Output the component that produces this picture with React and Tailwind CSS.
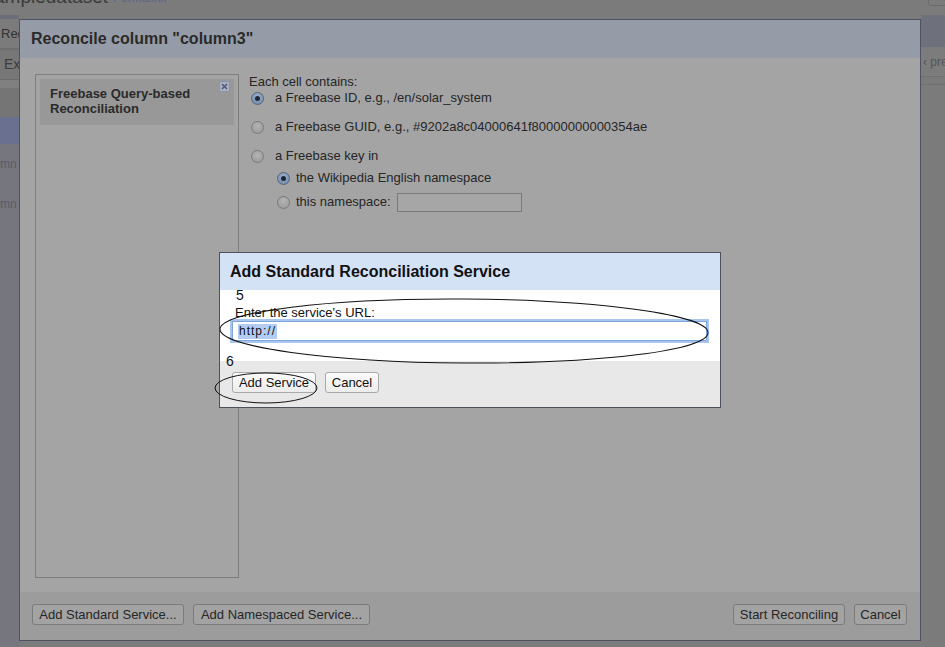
import React from "react";

function Radio({ checked }) {
  if (checked) {
    return (
      <span className="flex items-center justify-center w-[13px] h-[13px] rounded-full border border-[#56657c] bg-[radial-gradient(circle_at_50%_35%,#9fb3cf,#6b83a6)] shrink-0">
        <span className="w-[5px] h-[5px] rounded-full bg-[#1f2735]" />
      </span>
    );
  }
  return (
    <span className="w-[13px] h-[13px] rounded-full border border-[#7a7a7a] bg-[radial-gradient(circle_at_50%_35%,#b4b4b4,#979797)] shrink-0" />
  );
}

function DimButton({ children, w }) {
  return (
    <div
      className={`h-[21px] ${w} flex items-center justify-center rounded-[3px] border border-[#7b7b7b] bg-[#a3a3a3] text-[13px] text-[#262626] leading-none`}
    >
      {children}
    </div>
  );
}

function LightButton({ children, w }) {
  return (
    <div
      className={`h-[21px] ${w} flex items-center justify-center rounded-[3px] border border-[#a9a9a9] bg-[linear-gradient(#fbfbfb,#ececec)] text-[13px] text-[#111] leading-none`}
    >
      {children}
    </div>
  );
}

export default function App() {
  return (
    <div className="relative w-[945px] h-[647px] overflow-hidden bg-[#7b7b7b] font-['Liberation_Sans',Arial,sans-serif]">
      {/* background application (dimmed) */}
      <div className="flex flex-col h-full">
        <div className="h-[15px] bg-[#7b7b7b] relative overflow-hidden">
          <span className="absolute left-[-6px] top-[-15px] text-[19px] leading-[24px] text-[#3a3a3a] whitespace-nowrap">ampledataset</span>
          <span className="absolute left-[113px] top-[-9px] text-[12px] leading-[14px] text-[#56688c] whitespace-nowrap">Permalink</span>
          <span className="absolute left-[928px] top-[-6px] w-[30px] h-[12px] rounded-[3px] border border-[#6a6a6a]" />
        </div>
        <div className="flex flex-1">
          <div className="w-[19px] flex flex-col bg-[#75767e]">
            <div className="h-[4px] bg-[#6c6e79]" />
            <div className="h-[29px] bg-[#7b7b7b] text-[13px] text-[#333] leading-[29px] pl-[1px] overflow-hidden whitespace-nowrap">Red</div>
            <div className="h-[2px] bg-[#6e6e6e]" />
            <div className="h-[30px] bg-[#777] text-[14px] text-[#3d3d3d] leading-[28px] pl-[4px] overflow-hidden border-b border-[#6a6a6a] whitespace-nowrap">Ex</div>
            <div className="h-[8px] bg-[#808080]" />
            <div className="h-[29px] bg-[#757575]" />
            <div className="h-[27px] bg-[#6a7090]" />
            <div className="h-[45px] bg-[#75767e] text-[12px] text-[#5b5c64] leading-[30px] pt-[5px] overflow-hidden whitespace-nowrap">mn</div>
            <div className="h-[45px] bg-[#75767e] text-[12px] text-[#5b5c64] leading-[30px] overflow-hidden whitespace-nowrap">mn</div>
            <div className="flex-1 bg-[#75767e]" />
          </div>
          <div className="flex-1 bg-[#7b7b7b]" />
          <div className="w-[24px] flex flex-col">
            <div className="h-[32px] bg-[#6e707c]" />
            <div className="h-[30px] bg-[#7c7c7c] border-b border-[#6f6f6f] text-[12px] text-[#555] leading-[30px] pl-[2px] whitespace-nowrap overflow-hidden">‹ pre</div>
            <div className="h-[8px] bg-[#7a7a7a] border-b border-[#6f6f6f]" />
            <div className="flex-1 bg-[#7b7b7b]" />
          </div>
        </div>
      </div>

      {/* main dialog (dimmed) */}
      <div className="absolute left-[19px] top-[19px] w-[902px] h-[622px] border border-[#4e5363] bg-[#a4a4a4] flex flex-col">
        <div className="h-[38px] bg-[#969ca7] flex items-center pl-[11px] text-[16px] font-bold text-[#2a2a2a]">
          Reconcile column "column3"
        </div>
        <div className="flex-1 flex pl-[15px] pt-[16px] pb-[14px]">
          <div className="w-[204px] h-full border border-[#7e7e7e] p-[4px]">
            <div className="relative h-[46px] bg-[#989898] pl-[10px] pt-[7px] text-[13px] leading-[15px] font-bold text-[#2a2a2a]">
              <div>Freebase Query-based</div>
              <div>Reconciliation</div>
              <span className="absolute right-[4px] top-[2px] w-[11px] h-[11px] border border-[#8b93a8] bg-[#a9b0c4] flex items-center justify-center">
                <svg width="7" height="7" viewBox="0 0 7 7">
                  <path d="M1 1L6 6M6 1L1 6" stroke="#4f5a78" strokeWidth="1.6" />
                </svg>
              </span>
            </div>
          </div>
          <div className="ml-[10px] flex flex-col text-[13px] text-[#262626]">
            <div className="h-[15px] leading-[15px]">Each cell contains:</div>
            <div className="h-[18px] flex items-center pl-[2px] gap-[11px]">
              <Radio checked />
              <span>a Freebase ID, e.g., /en/solar_system</span>
            </div>
            <div className="mt-[11px] h-[18px] flex items-center pl-[2px] gap-[11px]">
              <Radio />
              <span>a Freebase GUID, e.g., #9202a8c04000641f80000000000354ae</span>
            </div>
            <div className="mt-[11px] h-[18px] flex items-center pl-[2px] gap-[11px]">
              <Radio />
              <span>a Freebase key in</span>
            </div>
            <div className="mt-[4px] h-[18px] flex items-center pl-[28px] gap-[6px]">
              <Radio checked />
              <span>the Wikipedia English namespace</span>
            </div>
            <div className="mt-[5px] h-[20px] flex items-center pl-[28px] gap-[6px]">
              <Radio />
              <span>this namespace:</span>
              <span className="w-[125px] h-[19px] border border-[#7a7a7a] bg-[#a6a6a6]" />
            </div>
          </div>
        </div>
        <div className="h-[48px] bg-[#9c9c9c] flex items-start pt-[12px] pl-[12px] pr-[13px]">
          <div className="flex gap-[9px]">
            <DimButton w="w-[152px]">Add Standard Service...</DimButton>
            <DimButton w="w-[177px]">Add Namespaced Service...</DimButton>
          </div>
          <div className="ml-auto flex gap-[9px]">
            <DimButton w="w-[112px]">Start Reconciling</DimButton>
            <DimButton w="w-[53px]">Cancel</DimButton>
          </div>
        </div>
      </div>

      {/* inner modal */}
      <div className="absolute left-[219px] top-[252px] w-[502px] h-[156px] border border-[#4b505c] bg-white flex flex-col">
        <div className="h-[37px] bg-[#d4e2f6] flex items-center pl-[10px] text-[16px] font-bold text-[#111]">
          Add Standard Reconciliation Service
        </div>
        <div className="h-[71px] bg-white relative pl-[12px]">
          <div className="absolute left-[16px] top-[-5px] text-[14px] text-[#111]">5</div>
          <div className="pt-[15px] pl-[3px] text-[13px] leading-[16px] text-[#111]">Enter the service's URL:</div>
          <div className="w-[475px] h-[20px] border border-[#7da6dc] shadow-[0_0_0_2px_#a9c6ee] bg-white flex items-center pl-[5px]">
            <span className="bg-[#b3cdf2] text-[12px] leading-[15px] tracking-[1px] text-[#111] px-[1px]">http://</span>
          </div>
        </div>
        <div className="flex-1 bg-[#e8e8e8] relative pl-[12px] pt-[11px] flex gap-[9px]">
          <div className="absolute left-[6px] top-[-10px] text-[14px] text-[#111]">6</div>
          <LightButton w="w-[84px]">Add Service</LightButton>
          <LightButton w="w-[54px]">Cancel</LightButton>
        </div>
      </div>

      {/* hand-drawn annotation ellipses */}
      <svg className="absolute left-0 top-0 pointer-events-none" width="945" height="647">
        <ellipse cx="464" cy="331" rx="244" ry="32" fill="none" stroke="#111" strokeWidth="1" transform="rotate(0.4 464 331)" />
        <ellipse cx="266" cy="388" rx="51" ry="15" fill="none" stroke="#111" strokeWidth="1" />
      </svg>
    </div>
  );
}
